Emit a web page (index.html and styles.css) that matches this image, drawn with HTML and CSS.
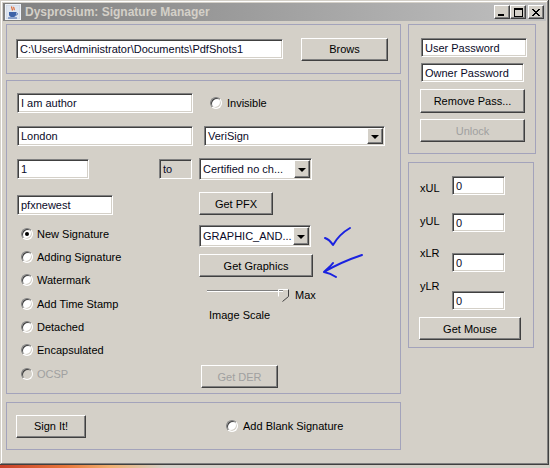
FILE: index.html
```html
<!DOCTYPE html>
<html>
<head>
<meta charset="utf-8">
<title>Dysprosium: Signature Manager</title>
<link rel="stylesheet" href="styles.css">
</head>
<body>
<div class="window">
  <div class="titlebar">
    <svg class="app-icon" width="16" height="16" viewBox="0 0 16 16">
      <rect x="0.5" y="0.5" width="15" height="15" fill="#c9d3e3" stroke="#eef2f8"/>
      <rect x="1.5" y="1.5" width="13" height="13" fill="#dfe6f0"/>
      <path d="M7 2.5 C5.5 4 8.5 5 7 6.5 M9 3 C8 4.2 10 5 9 6.2" stroke="#e0642c" stroke-width="1.2" fill="none"/>
      <path d="M4 8 H11 V10.5 C11 12.5 9.5 13 7.5 13 C5.5 13 4 12.5 4 10.5 Z" fill="#3d63a8"/>
      <path d="M11 8.8 C13 8.8 13 11 11 11" stroke="#3d63a8" stroke-width="1" fill="none"/>
      <path d="M3 14 H12" stroke="#3d63a8" stroke-width="1"/>
    </svg>
    <span class="title-text">Dysprosium: Signature Manager</span>
    <div class="title-buttons">
      <div class="tbtn"><span class="g-min"></span></div>
      <div class="tbtn"><span class="g-max"></span></div>
      <div class="tbtn tbtn-close">
        <svg width="8" height="7" viewBox="0 0 8 7"><path d="M0 0 L7 7 M1 0 L8 7 M7 0 L0 7 M8 0 L1 7" stroke="#000" stroke-width="1" fill="none"/></svg>
      </div>
    </div>
  </div>

  <div class="client">
    <div class="col-left">
      <div class="panel panel-file">
        <div class="field w-path">C:\Users\Administrator\Documents\PdfShots1</div>
        <div class="btn w-brows">Brows</div>
      </div>

      <div class="panel panel-main">
        <div class="row row1">
          <div class="field w-author">I am author</div>
          <label class="radio-item ml-invisible"><span class="radio"></span>Invisible</label>
        </div>
        <div class="row row2">
          <div class="field w-author">London</div>
          <div class="combo w-verisign"><span class="combo-text">VeriSign</span><span class="combo-arrow"><span class="tri"></span></span></div>
        </div>
        <div class="row row3">
          <div class="field w-one">1</div>
          <div class="field field-disabled w-to">to</div>
          <div class="combo w-cert"><span class="combo-text">Certified no ch...</span><span class="combo-arrow"><span class="tri"></span></span></div>
        </div>
        <div class="row row4">
          <div class="field w-pfx">pfxnewest</div>
          <div class="btn w-getpfx">Get PFX</div>
        </div>
        <div class="lower">
          <div class="radio-list">
            <label class="radio-row"><span class="radio checked"></span>New Signature</label>
            <label class="radio-row"><span class="radio"></span>Adding Signature</label>
            <label class="radio-row"><span class="radio"></span>Watermark</label>
            <label class="radio-row"><span class="radio"></span>Add Time Stamp</label>
            <label class="radio-row"><span class="radio"></span>Detached</label>
            <label class="radio-row"><span class="radio"></span>Encapsulated</label>
            <label class="radio-row disabled"><span class="radio"></span>OCSP</label>
          </div>
          <div class="graphics-col">
            <div class="combo w-graphic"><span class="combo-text">GRAPHIC_AND...</span><span class="combo-arrow"><span class="tri"></span></span></div>
            <div class="btn w-getgraphics">Get Graphics</div>
            <div class="slider-row">
              <div class="slider">
                <div class="track"></div>
                <svg class="thumb" width="12" height="13" viewBox="0 0 12 13">
                  <path d="M0.5 7.5 V0.5 H10.5" stroke="#fff" fill="none"/>
                  <path d="M10.5 0.5 V7.5 L4.5 12.5" stroke="#404040" fill="none"/>
                </svg>
              </div>
              <span class="max">Max</span>
            </div>
            <div class="image-scale">Image Scale</div>
            <div class="btn disabled w-getder">Get DER</div>
          </div>
        </div>
        <svg class="annot-check" width="30" height="22" viewBox="0 0 30 22">
          <path d="M2 12 C5 13 8 16 10 19 C14 12 20 6 27 2" stroke="#1a22e0" stroke-width="2" fill="none" stroke-linecap="round" stroke-linejoin="round"/>
        </svg>
        <svg class="annot-arrow" width="46" height="28" viewBox="0 0 46 28">
          <path d="M43 2 C34 5 22 9 5 19 M5 19 C9 15 12 13 14 10 M5 19 C10 20 14 22 17 24" stroke="#1a22e0" stroke-width="2" fill="none" stroke-linecap="round" stroke-linejoin="round"/>
        </svg>
      </div>

      <div class="panel panel-sign">
        <div class="btn w-sign">Sign It!</div>
        <label class="radio-item ml-blank"><span class="radio"></span>Add Blank Signature</label>
      </div>
    </div>

    <div class="col-right">
      <div class="panel panel-pass">
        <div class="field w-user">User Password</div>
        <div class="field w-owner">Owner Password</div>
        <div class="btn w-remove">Remove Pass...</div>
        <div class="btn disabled w-unlock">Unlock</div>
      </div>
      <div class="panel panel-coords">
        <div class="coord-row r1"><span class="coord-label">xUL</span><div class="field w-coord">0</div></div>
        <div class="coord-row r2"><span class="coord-label">yUL</span><div class="field w-coord">0</div></div>
        <div class="coord-row r3"><span class="coord-label">xLR</span><div class="field w-coord">0</div></div>
        <div class="coord-row r4"><span class="coord-label">yLR</span><div class="field w-coord">0</div></div>
        <div class="btn w-mouse">Get Mouse</div>
      </div>
    </div>
  </div>
</div>
<div class="taskbar"></div>
</body>
</html>
```

FILE: styles.css
```css
* { box-sizing: border-box; }

html, body {
  margin: 0;
  padding: 0;
  background: #d4d0c8;
  width: 550px;
  height: 468px;
  overflow: hidden;
  font-family: "Liberation Sans", Arial, sans-serif;
  font-size: 11px;
  color: #000;
}

.window {
  width: 549px;
  height: 465px;
  padding: 3px;
  background: #d4d0c8;
  box-shadow: inset -1px -1px #404040, inset 1px 1px #d4d0c8, inset -2px -2px #808080, inset 2px 2px #ffffff;
}

.titlebar {
  height: 18px;
  display: flex;
  align-items: center;
  background: linear-gradient(to right, #808080, #c0c0c0);
  padding-left: 2px;
}

.app-icon { flex: none; }

.title-text {
  margin-left: 4px;
  font-weight: bold;
  font-size: 12px;
  color: #d4d0c8;
  white-space: nowrap;
}

.title-buttons {
  margin-left: auto;
  display: flex;
  align-items: center;
  margin-right: 2px;
}

.tbtn {
  width: 16px;
  height: 14px;
  background: #d4d0c8;
  border: 1px solid;
  border-color: #fff #404040 #404040 #fff;
  box-shadow: inset -1px -1px #808080;
  position: relative;
  display: flex;
  align-items: center;
  justify-content: center;
}

.tbtn-close { margin-left: 2px; }

.g-min {
  position: absolute;
  left: 3px;
  bottom: 2px;
  width: 6px;
  height: 2px;
  background: #000;
}

.g-max {
  width: 9px;
  height: 9px;
  border: 1px solid #000;
  border-top-width: 2px;
}

.client {
  display: flex;
  padding: 3px 0 0 3px;
}

.col-left {
  width: 395px;
  display: flex;
  flex-direction: column;
}

.col-right {
  margin-left: 7px;
  display: flex;
  flex-direction: column;
}

.panel {
  border: 1px solid #a3a3bb;
  position: relative;
}

/* ---------- controls ---------- */

.field {
  background: #fff;
  border: 1px solid;
  border-color: #808080 #fff #fff #808080;
  box-shadow: inset 1px 1px #404040, inset -1px -1px #d4d0c8;
  padding-left: 3px;
  display: flex;
  align-items: center;
  white-space: nowrap;
  overflow: hidden;
  height: 20px;
  color: #0a0a28;
}

.field-disabled { background: #d4d0c8; }

.btn {
  background: #d4d0c8;
  border: 1px solid;
  border-color: #fff #404040 #404040 #fff;
  box-shadow: inset -1px -1px #808080;
  display: flex;
  align-items: center;
  justify-content: center;
  height: 23px;
  white-space: nowrap;
}

.btn.disabled { color: #a0a0a0; }

.combo {
  background: #fff;
  border: 1px solid;
  border-color: #808080 #fff #fff #808080;
  box-shadow: inset 1px 1px #404040, inset -1px -1px #d4d0c8;
  display: flex;
  align-items: stretch;
  padding: 1px 1px 1px 0;
}

.combo-text {
  flex: 1;
  display: flex;
  align-items: center;
  padding-left: 3px;
  white-space: nowrap;
  overflow: hidden;
  color: #0a0a28;
}

.combo-arrow {
  width: 16px;
  background: #d4d0c8;
  border: 1px solid;
  border-color: #fff #404040 #404040 #fff;
  box-shadow: inset -1px -1px #808080;
  display: flex;
  align-items: center;
  justify-content: center;
}

.tri {
  width: 0;
  height: 0;
  border-left: 4px solid transparent;
  border-right: 4px solid transparent;
  border-top: 4px solid #000;
  margin-top: 1px;
}

.radio {
  flex: none;
  width: 12px;
  height: 12px;
  border-radius: 50%;
  background: #fff;
  border: 1px solid;
  border-color: #808080 #fff #fff #808080;
  box-shadow: inset 1px 1px #404040, inset -1px -1px #d4d0c8;
  position: relative;
}

.radio.checked::after {
  content: "";
  position: absolute;
  left: 3px;
  top: 3px;
  width: 4px;
  height: 4px;
  border-radius: 50%;
  background: #000;
}

.radio-item {
  display: flex;
  align-items: center;
  gap: 5px;
  white-space: nowrap;
}

/* ---------- file panel ---------- */

.panel-file {
  height: 50px;
  display: flex;
  align-items: center;
  padding-left: 9px;
}

.w-path { width: 267px; }
.w-brows { width: 87px; margin-left: 18px; }

/* ---------- main panel ---------- */

.panel-main {
  margin-top: 6px;
  height: 314px;
  padding-left: 10px;
}

.row { display: flex; align-items: center; }
.row1 { margin-top: 12px; height: 20px; }
.row2 { margin-top: 13px; height: 20px; }
.row3 { margin-top: 12px; height: 22px; }
.row4 { margin-top: 12px; height: 23px; align-items: flex-end; }

.w-author { width: 176px; }
.ml-invisible { margin-left: 17px; }
.w-verisign { width: 181px; height: 20px; margin-left: 11px; }
.w-one { width: 72px; }
.w-to { width: 33px; margin-left: 70px; }
.w-cert { width: 113px; height: 22px; margin-left: 7px; }
.w-pfx { width: 96px; }
.w-getpfx { width: 74px; margin-left: 86px; }

.lower {
  display: flex;
  margin-top: 7px;
}

.radio-list {
  width: 182px;
  display: flex;
  flex-direction: column;
}

.radio-row {
  height: 23.33px;
  display: flex;
  align-items: center;
  gap: 4px;
  padding-left: 4px;
  white-space: nowrap;
}

.radio-row.disabled { color: #a0a0a0; }
.radio-row.disabled .radio { background: #d4d0c8; }

.graphics-col {
  display: flex;
  flex-direction: column;
  align-items: flex-start;
}

.w-graphic { width: 112px; height: 22px; margin-top: 3px; }
.w-getgraphics { width: 114px; margin-top: 7px; }

.slider-row {
  margin-top: 12px;
  height: 14px;
  display: flex;
  align-items: center;
  margin-left: 8px;
}

.slider {
  position: relative;
  width: 82px;
  height: 14px;
}

.track {
  position: absolute;
  left: 0;
  top: 1px;
  width: 76px;
  height: 2px;
  border-top: 1px solid #808080;
  border-bottom: 1px solid #fff;
}

.thumb {
  position: absolute;
  left: 71px;
  top: 0;
}

.max { margin-left: 6px; margin-top: -2px; }

.image-scale {
  margin-top: 6px;
  margin-left: 10px;
  line-height: 13px;
}

.w-getder { width: 77px; margin-top: 43px; margin-left: 2px; }

.annot-check {
  position: absolute;
  left: 316px;
  top: 145px;
}

.annot-arrow {
  position: absolute;
  left: 312px;
  top: 172px;
}

/* ---------- sign panel ---------- */

.panel-sign {
  margin-top: 8px;
  height: 48px;
  display: flex;
  align-items: center;
  padding-left: 9px;
}

.w-sign { width: 70px; }
.ml-blank { margin-left: 140px; }

/* ---------- password panel ---------- */

.panel-pass {
  width: 128px;
  height: 130px;
  padding: 13px 0 0 12px;
  display: flex;
  flex-direction: column;
  align-items: flex-start;
}

.w-user { width: 106px; height: 19px; }
.w-owner { width: 103px; height: 19px; margin-top: 6px; }
.w-remove { width: 105px; height: 24px; margin-top: 7px; margin-left: -1px; }
.w-unlock { width: 105px; margin-top: 6px; margin-left: -1px; }

/* ---------- coordinates panel ---------- */

.panel-coords {
  margin-top: 8px;
  width: 126px;
  height: 186px;
  padding-left: 11px;
  display: flex;
  flex-direction: column;
  align-items: flex-start;
}

.coord-row {
  display: flex;
  align-items: flex-start;
}

.coord-label {
  width: 32px;
  line-height: 13px;
}

.w-coord { width: 53px; height: 19px; }

.r1 { margin-top: 13px; }
.r1 .coord-label { margin-top: 6px; }
.r2 { margin-top: 18px; }
.r2 .coord-label { margin-top: 2px; }
.r3 { margin-top: 21px; }
.r3 .coord-label { margin-top: -6px; }
.r4 { margin-top: 19px; }
.r4 .coord-label { margin-top: -11px; }

.w-mouse { width: 102px; margin-top: 7px; margin-left: -1px; }

.taskbar {
  height: 3px;
  background: linear-gradient(to right, #c8402a, #e8783c 12%, #f0b070 20%, #d4d0c8 30%);
}
```
